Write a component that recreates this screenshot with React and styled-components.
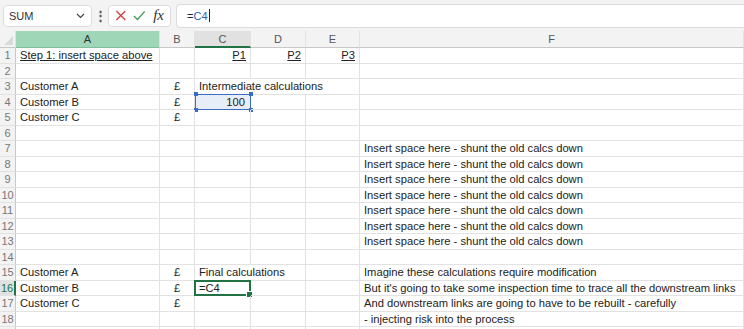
import React from "react";
import styled, { createGlobalStyle, css } from "styled-components";

const GlobalStyle = createGlobalStyle`
  body {
    margin: 0;
    background: #ffffff;
    font-family: "Liberation Sans", Arial, sans-serif;
    overflow: hidden;
  }
`;

const GREEN = "#217346";
const GRID = "#e2e2e2";

const Toolbar = styled.div`
  display: flex;
  align-items: center;
  height: 31px;
  padding: 0 0 0 3px;
  background: #f3f3f3;
  box-sizing: border-box;
`;

const NameBox = styled.div`
  display: flex;
  align-items: center;
  justify-content: space-between;
  width: 89px;
  height: 22px;
  padding: 0 6px 0 5px;
  box-sizing: border-box;
  background: #fff;
  border: 1px solid #dcdcdc;
  border-radius: 4px;
  font-size: 11px;
  color: #333;
`;

const Dots = styled.div`
  width: 16px;
  text-align: center;
  font-size: 13px;
  font-weight: bold;
  color: #555;
`;

const IconBox = styled.div`
  display: flex;
  align-items: center;
  gap: 6px;
  height: 22px;
  width: 63px;
  padding: 0 6px;
  box-sizing: border-box;
  background: #fff;
  border: 1px solid #dcdcdc;
  border-radius: 4px;
`;

const Fx = styled.span`
  font-family: "Liberation Serif", "Times New Roman", serif;
  font-style: italic;
  font-size: 15px;
  color: #333;
  margin-left: 2px;
`;

const FormulaBox = styled.div`
  flex: 1;
  display: flex;
  align-items: center;
  height: 22px;
  margin-left: 5px;
  padding-left: 10px;
  background: #fff;
  border: 1px solid #dcdcdc;
  border-right: none;
  border-radius: 4px 0 0 4px;
  font-size: 11px;
  color: #222;
`;

const Ref = styled.span`
  color: #2f5fa8;
`;

const Caret = styled.span`
  display: inline-block;
  width: 1px;
  height: 13px;
  background: #222;
  margin-left: 1px;
`;

const Sheet = styled.div`
  display: grid;
  grid-template-columns: 16px 144px 35px 56px 55px 54px 1fr;
  grid-template-rows: 17px;
  grid-auto-rows: 15.5px;
  font-size: 11.2px;
  color: #222;
`;

const Corner = styled.div`
  position: relative;
  background: #f3f3f3;
  border-right: 1px solid ${GRID};
  border-bottom: 1px solid #c8c8c8;
  &::after {
    content: "";
    position: absolute;
    right: 2px;
    bottom: 2px;
    border-left: 9px solid transparent;
    border-bottom: 9px solid #dadada;
  }
`;

const ColHeader = styled.div`
  display: flex;
  align-items: center;
  justify-content: center;
  background: #f3f3f3;
  color: #555;
  font-size: 11px;
  border-right: 1px solid ${GRID};
  border-bottom: 1px solid #c8c8c8;
  box-sizing: border-box;
  ${(p) =>
    p.$state === "selected" &&
    css`
      background: #a0d6b8;
      color: #333;
      border-bottom: 1px solid #7fbf9c;
    `}
  ${(p) =>
    p.$state === "active" &&
    css`
      background: #e1e1e1;
      border-bottom: 2px solid ${GREEN};
    `}
`;

const RowHeader = styled.div`
  display: flex;
  align-items: center;
  justify-content: center;
  background: #f3f3f3;
  color: #777;
  font-size: 11px;
  border-bottom: 1px solid ${GRID};
  border-right: 1px solid #c8c8c8;
  box-sizing: border-box;
  ${(p) =>
    p.$active &&
    css`
      background: #e1e1e1;
      color: ${GREEN};
      border-right: 2px solid ${GREEN};
    `}
`;

const Cell = styled.div`
  position: relative;
  display: flex;
  align-items: center;
  justify-content: ${(p) =>
    p.$align === "right" ? "flex-end" : p.$align === "center" ? "center" : "flex-start"};
  padding: 0 4px;
  border-right: 1px solid ${GRID};
  border-bottom: 1px solid ${GRID};
  box-sizing: border-box;
  white-space: nowrap;
  overflow: visible;
  grid-column: span ${(p) => p.$span || 1};
  text-decoration: ${(p) => (p.$underline ? "underline" : "none")};
  ${(p) =>
    p.$refCell &&
    css`
      background: #e8eef8;
      padding-right: 5px;
    `}
`;

const RefFrame = styled.div`
  position: absolute;
  left: 0;
  top: -1px;
  right: -1px;
  bottom: -1px;
  border: 1.5px solid #3b6cc3;
  pointer-events: none;
`;

const Handle = styled.span`
  position: absolute;
  width: 4px;
  height: 4px;
  background: #3b6cc3;
  ${(p) => (p.$top ? "top: -2.5px;" : "bottom: -2.5px;")}
  ${(p) => (p.$left ? "left: -2.5px;" : "right: -2.5px;")}
`;

const ActiveFrame = styled.div`
  position: absolute;
  left: -1px;
  top: -1px;
  right: -1px;
  bottom: -1px;
  border: 2px solid ${GREEN};
  pointer-events: none;
  &::after {
    content: "";
    position: absolute;
    right: -4px;
    bottom: -4px;
    width: 5px;
    height: 5px;
    background: ${GREEN};
    border: 1px solid #fff;
  }
`;

const COLS = ["A", "B", "C", "D", "E", "F"];
const INSERT = "Insert space here - shunt the old calcs down";

const pound = { t: "£", align: "center" };

const DATA = {
  1: {
    A: { t: "Step 1: insert space above", u: true },
    C: { t: "P1", u: true, align: "right" },
    D: { t: "P2", u: true, align: "right" },
    E: { t: "P3", u: true, align: "right" },
  },
  3: { A: { t: "Customer A" }, B: pound, C: { t: "Intermediate calculations", span: 3 } },
  4: { A: { t: "Customer B" }, B: pound, C: { t: "100", align: "right", ref: true } },
  5: { A: { t: "Customer C" }, B: pound },
  7: { F: { t: INSERT } },
  8: { F: { t: INSERT } },
  9: { F: { t: INSERT } },
  10: { F: { t: INSERT } },
  11: { F: { t: INSERT } },
  12: { F: { t: INSERT } },
  13: { F: { t: INSERT } },
  15: {
    A: { t: "Customer A" },
    B: pound,
    C: { t: "Final calculations", span: 2 },
    F: { t: "Imagine these calculations require modification" },
  },
  16: {
    A: { t: "Customer B" },
    B: pound,
    C: { t: "=C4", active: true },
    F: { t: "But it's going to take some inspection time to trace all the downstream links" },
  },
  17: {
    A: { t: "Customer C" },
    B: pound,
    F: { t: "And downstream links are going to have to be rebuilt - carefully" },
  },
  18: { F: { t: "- injecting risk into the process" } },
};

function renderRow(n, label = n) {
  const row = DATA[n] || {};
  const out = [
    <RowHeader key={`h${n}`} $active={n === 16}>
      {label}
    </RowHeader>,
  ];
  let skip = 0;
  COLS.forEach((c) => {
    if (skip > 0) {
      skip -= 1;
      return;
    }
    const cell = row[c];
    if (!cell) {
      out.push(<Cell key={`${c}${n}`} />);
      return;
    }
    if (cell.span) skip = cell.span - 1;
    out.push(
      <Cell
        key={`${c}${n}`}
        $span={cell.span}
        $align={cell.align}
        $underline={cell.u}
        $refCell={cell.ref}
      >
        {cell.t}
        {cell.ref && (
          <RefFrame>
            <Handle $top $left />
            <Handle $top />
            <Handle $left />
            <Handle />
          </RefFrame>
        )}
        {cell.active && <ActiveFrame />}
      </Cell>
    );
  });
  return out;
}

function XIcon() {
  return (
    <svg width="13" height="13" viewBox="0 0 13 13">
      <path d="M1.5 1.5 L11.5 11.5 M11.5 1.5 L1.5 11.5" stroke="#d13c3c" strokeWidth="1.4" fill="none" />
    </svg>
  );
}

function CheckIcon() {
  return (
    <svg width="14" height="13" viewBox="0 0 14 13">
      <path d="M1 7 L5 11 L13 2" stroke="#3f9c5a" strokeWidth="1.4" fill="none" />
    </svg>
  );
}

function Chevron() {
  return (
    <svg width="9" height="6" viewBox="0 0 9 6">
      <path d="M1 1 L4.5 4.5 L8 1" stroke="#444" strokeWidth="1.2" fill="none" />
    </svg>
  );
}

export default function App() {
  const rows = [];
  for (let i = 1; i <= 18; i += 1) rows.push(...renderRow(i));
  rows.push(...renderRow(19, ""));
  return (
    <>
      <GlobalStyle />
      <Toolbar>
        <NameBox>
          SUM
          <Chevron />
        </NameBox>
        <Dots>⋮</Dots>
        <IconBox>
          <XIcon />
          <CheckIcon />
          <Fx>fx</Fx>
        </IconBox>
        <FormulaBox>
          =<Ref>C4</Ref>
          <Caret />
        </FormulaBox>
      </Toolbar>
      <Sheet>
        <Corner />
        {COLS.map((c) => (
          <ColHeader key={c} $state={c === "A" ? "selected" : c === "C" ? "active" : undefined}>
            {c}
          </ColHeader>
        ))}
        {rows}
      </Sheet>
    </>
  );
}
